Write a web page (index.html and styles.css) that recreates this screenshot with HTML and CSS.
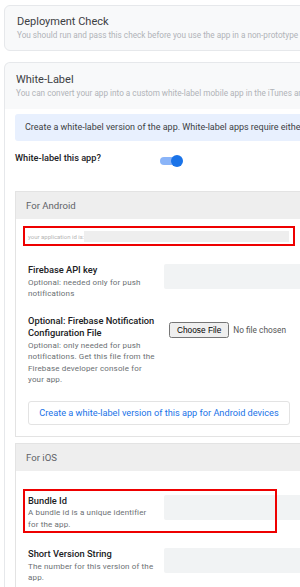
FILE: index.html
```html
<!DOCTYPE html>
<html>
<head>
  <meta charset="utf-8">
  <title>App settings</title>
  <link rel="stylesheet" href="styles.css">
</head>
<body>
  <div class="page">
    <div class="card">
      <div class="card-head">
        <div class="title">Deployment Check</div>
        <div class="sub">You should run and pass this check before you use the app in a non-prototype setting.</div>
      </div>
    </div>

    <div class="card wl">
      <div class="card-head">
        <div class="title">White-Label</div>
        <div class="sub">You can convert your app into a custom white-label mobile app in the iTunes and Google Play stores.</div>
      </div>
      <div class="card-body">
        <div class="info">Create a white-label version of the app. White-label apps require either a Pro or Business plan.</div>
        <div class="toggle-row">
          <div class="toggle-label">White-label this app?</div>
          <div class="toggle"><span class="knob"></span></div>
        </div>

        <div class="panel">
          <div class="panel-head">For Android</div>
          <div class="panel-body android">
            <div class="appid">
              <span>your application id is:</span>
              <div class="appid-bar"></div>
            </div>

            <div class="field">
              <div class="field-text">
                <div class="label">Firebase API key</div>
                <div class="desc">Optional: needed only for push notifications</div>
              </div>
              <div class="input"></div>
            </div>

            <div class="field">
              <div class="field-text">
                <div class="label">Optional: Firebase Notification Configuration File</div>
                <div class="desc">Optional: only needed for push notifications. Get this file from the Firebase developer console for your app.</div>
              </div>
              <div class="file-wrap"><input type="file" class="file"></div>
            </div>

            <div class="create-btn">Create a white-label version of this app for Android devices</div>
          </div>
        </div>

        <div class="panel">
          <div class="panel-head">For iOS</div>
          <div class="panel-body ios">
            <div class="field marked">
              <div class="field-text">
                <div class="label">Bundle Id</div>
                <div class="desc">A bundle id is a unique identifier for the app.</div>
              </div>
              <div class="input"></div>
              <div class="mark"></div>
            </div>

            <div class="field">
              <div class="field-text">
                <div class="label">Short Version String</div>
                <div class="desc">The number for this version of the app.</div>
              </div>
              <div class="input"></div>
            </div>
          </div>
        </div>
      </div>
    </div>
  </div>
</body>
</html>
```

FILE: styles.css
```css
*{font-family:Roboto,"Liberation Sans",sans-serif;box-sizing:border-box}
html, body {
    margin: 0;
    padding: 0;
    overflow: hidden;
    background: white;
}
.page {
    width: 720px;
    padding: 5px 0 0 4px;
}
.card {
    border: 1px solid #e6e8eb;
    border-radius: 6px;
    background-color: #f8f9fa;
    overflow: hidden;
}
.card-head {
    padding: 8px 12px 9px 12px;
}
.title {
    font-size: 11px;
    line-height: 15px;
    color: #3c4043;
}
.sub {
    font-size: 8.2px;
    line-height: 12px;
    color: #b0b3b8;
    white-space: nowrap;
}
.wl {
    margin-top: 11px;
    border-bottom: none;
    border-radius: 6px 6px 0 0;
}
.wl .card-head {
    padding: 9px 11px 10px 11px;
}
.card-body {
    background: white;
    padding: 5px 10px 20px 10px;
}
.info {
    background-color: #e8f0fe;
    border-radius: 3px;
    height: 27px;
    line-height: 27px;
    padding: 0 10px;
    font-size: 9px;
    color: #3c4043;
    white-space: nowrap;
}
.toggle-row {
    display: flex;
    align-items: flex-start;
    padding-top: 11px;
    height: 50px;
}
.toggle-label {
    width: 145px;
    font-size: 9.2px;
    font-weight: 500;
    color: #202124;
    line-height: 12px;
}
.toggle {
    position: relative;
    width: 20px;
    height: 8px;
    margin-top: 5px;
    border-radius: 4px;
    background-color: #8ab4f8;
}
.knob {
    position: absolute;
    right: -3px;
    top: -2px;
    width: 12px;
    height: 12px;
    border-radius: 50%;
    background-color: #1a73e8;
}
.panel {
    border: 1px solid #e3e3e3;
    margin-bottom: 6px;
}
.panel-head {
    background-color: #eeeeee;
    height: 27px;
    line-height: 27px;
    padding-left: 10px;
    font-size: 9.6px;
    color: #5f6368;
}
.panel-body {
    padding: 7px 8px 11px 7px;
}
.appid {
    display: flex;
    align-items: center;
    width: 272px;
    height: 20px;
    border: 2px solid #e00;
    padding: 0 4px 0 3px;
    margin-bottom: 18px;
}
.appid span {
    font-size: 6px;
    color: #b5b5b5;
    white-space: nowrap;
}
.appid-bar {
    flex: 1;
    height: 11px;
    background-color: #eeeeee;
}
.field {
    display: flex;
    align-items: flex-start;
    padding-left: 5px;
    margin-bottom: 18px;
    position: relative;
}
.android .field {
    margin-bottom: 15px;
}
.field-text {
    width: 136px;
    flex-shrink: 0;
    padding-right: 4px;
}
.label {
    font-size: 9.3px;
    font-weight: 500;
    line-height: 12.5px;
    color: #202124;
}
.desc {
    font-size: 8px;
    line-height: 11.5px;
    letter-spacing: 0.15px;
    color: #6b6f73;
    padding-right: 4px;
}
.input {
    flex: 1;
    height: 25px;
    background-color: #f1f3f4;
    border-radius: 2px;
}
.file-wrap {
    flex: 1;
    padding: 3px 0 0 5px;
}
.file {
    font-size: 8.3px;
    color: #555;
}
.create-btn {
    margin: 17px 0 0 5px;
    width: 262px;
    height: 24px;
    line-height: 22px;
    border: 1px solid #e3e3e3;
    border-radius: 3px;
    text-align: center;
    font-size: 9.2px;
    color: #1a73e8;
    white-space: nowrap;
}
.android .field + .create-btn {
    margin-top: 2px;
}
.panel-body.ios {
    padding-top: 24px;
}
.mark {
    position: absolute;
    left: 0;
    top: -6px;
    width: 254px;
    height: 44px;
    border: 2px solid #e00;
}
```
